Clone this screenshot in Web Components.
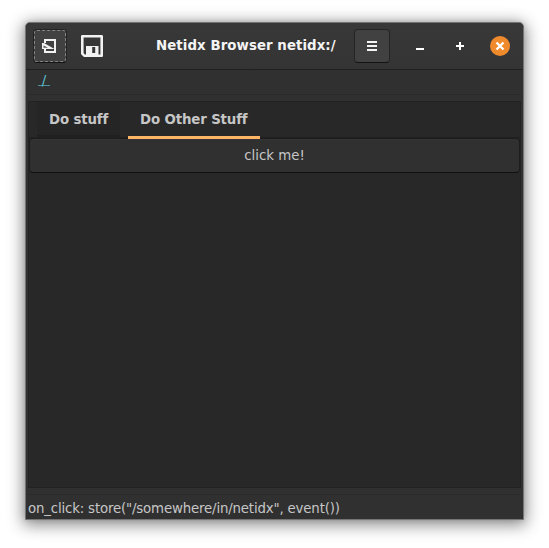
<!DOCTYPE html>
<html lang="en"><head><meta charset="utf-8"><title>Netidx Browser</title>
<style>
html,body{margin:0;background:#fff}
body{width:549px;height:548px;overflow:hidden;font:13.333px/16px "DejaVu Sans",sans-serif;color:#c6c6c6;padding:22px 25px 28px;box-sizing:border-box}
</style></head><body>
<app-window>
  <title-bar slot="header" heading="Netidx Browser netidx:/"></title-bar>
  <path-bar slot="path">/</path-bar>
  <note-book slot="content">
    <tab-label slot="tabs" style="width:83px">Do stuff</tab-label>
    <tab-label slot="tabs" active style="width:132px">Do Other Stuff</tab-label>
    <push-button>click me!</push-button>
  </note-book>
  <status-bar slot="status">on_click: store("/somewhere/in/netidx", event())</status-bar>
</app-window>
<script>
const define=(name,html)=>customElements.define(name,class extends HTMLElement{
  constructor(){super();this.attachShadow({mode:'open'}).innerHTML=html;}
  connectedCallback(){const h=this.shadowRoot.querySelector('[data-heading]');if(h)h.textContent=this.getAttribute('heading');}
});
define('app-window',`<style>
:host{display:flex;flex-direction:column;box-sizing:border-box;width:499px;height:498px;border:1px solid #747474;border-radius:5px 5px 0 0;background:#303030;overflow:hidden;}
:host{box-shadow:0 3px 16px 2px rgba(0,0,0,.46),0 0 5px rgba(0,0,0,.12)}
</style><slot name="header"></slot><slot name="path"></slot><slot name="content"></slot><slot name="status"></slot>`);
define('icon-button',`<style>
:host{display:grid;place-items:center;box-sizing:border-box;width:36px;height:34px;flex:none}
:host([raised]){border:1px solid #242424;border-bottom-color:#131313;border-radius:4px;background:#414141}
:host([focused]){outline:1px dashed #858585;outline-offset:-2px}
</style><slot></slot>`);
define('title-bar',`<style>
:host{display:grid;grid-template-columns:34px 50px 1fr 36px 10px 40px 40px 40px;align-items:center;box-sizing:border-box;height:47px;padding:0 3px 0 7px;background:linear-gradient(#383838,#343434);border-bottom:1px solid #202020}
svg{display:block;shape-rendering:crispEdges}
icon-button{width:100%}
b{color:#f4f4f4;white-space:nowrap;padding-left:39px;letter-spacing:.07px;margin-bottom:1px}
.close{width:20px;height:20px;border-radius:50%;background:#ef8b2c;display:grid;place-items:center}
.close svg{shape-rendering:auto}
</style>
<icon-button raised focused><svg width="16" height="16" viewBox="0 0 16 16" style="shape-rendering:auto"><path d="M3 5V2h10v12H3v-3" fill="none" stroke="#f2f2f2" stroke-width="2"/><path d="M0 5h2l10.5 6H0z" fill="#f2f2f2"/><path d="M1.5 7.5l4.5 2.3H1.5z" fill="#555"/></svg></icon-button>
<icon-button><svg width="22" height="22" viewBox="0 0 22 22" style="shape-rendering:auto"><path d="M1.3 1.3h19.4v19.4H3.3l-2-2z" fill="none" stroke="#f2f2f2" stroke-width="2.6" stroke-linejoin="round"/><path d="M5 11h12.5v10H5z" fill="#f2f2f2"/><path d="M11.2 12h3v6h-3z" fill="#363636"/></svg></icon-button>
<b data-heading></b>
<icon-button raised><svg width="10" height="10"><path d="M0 0h10v2H0zM0 4h10v2H0zM0 8h10v2H0z" fill="#f4f4f4"/></svg></icon-button><span></span>
<icon-button><svg width="8" height="8"><path d="M0 6h8v2H0z" fill="#fff"/></svg></icon-button>
<icon-button><svg width="8" height="8"><path d="M3 0h2v3h3v2H5v3H3V5H0V3h3z" fill="#fff"/></svg></icon-button>
<icon-button><span class="close"><svg width="10" height="10"><path d="M1.5 1.5l7 7m0-7l-7 7" stroke="#fff" stroke-width="2.3"/></svg></span></icon-button>`);
define('path-bar',`<style>
:host{display:block;box-sizing:border-box;height:25px;flex:none;padding:3px 0 0 10px;margin:0 2px;border-bottom:1px solid #2a2a2a;color:#5cc0d0}
span{display:inline-block;width:12px;text-align:center;height:12px;line-height:16px;border-bottom:1px solid #4b909b}
</style><span><slot></slot></span>`);
define('note-book',`<style>
:host{display:flex;flex-direction:column;box-sizing:border-box;height:387px;flex:none;margin:6px 2px 0;background:#282828;border:1px solid #222}
nav{display:flex;gap:8px;height:36px;padding:0 8px;border-bottom:1px solid #202020;box-sizing:border-box;position:relative;z-index:1}
</style><nav><slot name="tabs"></slot></nav><slot></slot>`);
define('tab-label',`<style>
:host{display:block;box-sizing:border-box;height:36px;padding:10px 0 0 12px;background:#252525;border-bottom:3px solid #202020;font-weight:bold;white-space:nowrap;letter-spacing:-.13px}
:host([active]){height:37px;background:#282828;border-color:#ffb466}
</style><slot></slot>`);
define('push-button',`<style>
:host{display:block;box-sizing:border-box;height:35px;margin:0;padding:9px 0 0;text-align:center;background:#303030;border:1px solid #1d1d1d;border-bottom-color:#111;border-radius:4px;box-shadow:inset 0 1px #343434}
</style><slot></slot>`);
define('status-bar',`<style>
:host{display:block;margin:6px 2px 0;padding-top:6px;border-top:1px solid #2a2a2a;white-space:nowrap;letter-spacing:-.165px}
</style><slot></slot>`);
</script></body></html>
